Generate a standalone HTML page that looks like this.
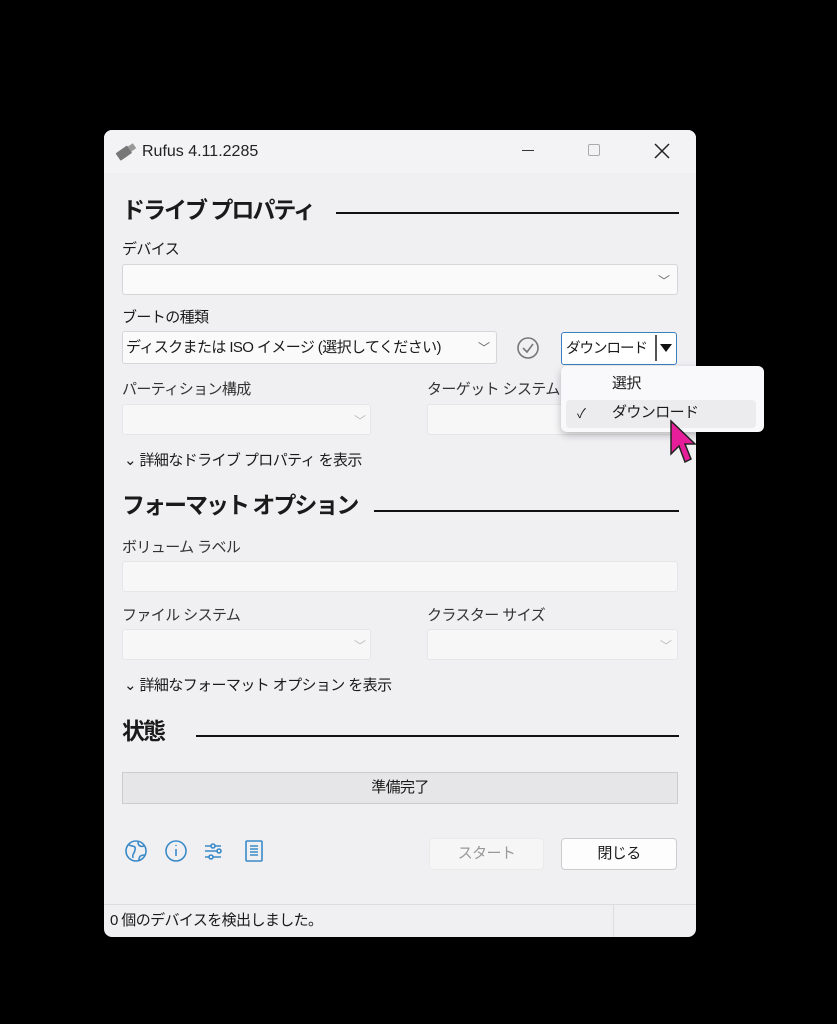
<!DOCTYPE html><html><head><meta charset="utf-8"><style>
*{margin:0;padding:0;box-sizing:border-box}
body{width:837px;height:1024px;background:#000;position:relative;overflow:hidden;font-family:"Liberation Sans","Noto Sans CJK JP",sans-serif;color:#1a1a1a}
.a{position:absolute}
#w{left:104px;top:130px;width:592px;height:807px;background:#f0f0f3;border-radius:8px;overflow:hidden}
.t{font-size:15px;white-space:nowrap;letter-spacing:-0.6px;line-height:20px}
.h{font-size:23px;font-weight:bold;letter-spacing:-2px;white-space:nowrap;line-height:30px}
.ln{height:2px;background:#111}
.box{border:1px solid #d6d6d8;background:#fafafa;border-radius:3px}
.dis{border:1px solid #e6e6e8;background:#f7f7f8}
.chev{font-size:12px;color:#666;line-height:14px}
</style></head><body>
<div id="w" class="a">
<div class="a" style="left:0;top:0;width:592px;height:43px;background:#f3f3f5"></div>
<svg class="a" style="left:10px;top:10px" width="24" height="22"><g transform="rotate(-35 12 11)"><rect x="2" y="7" width="14" height="9" rx="1" fill="#777"/><rect x="16" y="8.5" width="6" height="6" fill="#999"/></g></svg>
<div class="a t" style="left:38px;top:12px;font-size:16px;letter-spacing:0;color:#222">Rufus 4.11.2285</div>
<div class="a" style="left:418px;top:20px;width:12px;height:1px;background:#333"></div>
<div class="a" style="left:484px;top:14px;width:12px;height:12px;border:1px solid #aaa;border-radius:2px"></div>
<svg class="a" style="left:550px;top:13px" width="16" height="16"><path d="M1 1L15 15M15 1L1 15" stroke="#222" stroke-width="1.5"/></svg>

<div class="a h" style="left:18px;top:65px">ドライブ プロパティ</div>
<div class="a ln" style="left:232px;top:82px;width:343px"></div>
<div class="a t" style="left:18px;top:110px">デバイス</div>
<div class="a box" style="left:18px;top:134px;width:556px;height:31px"></div>
<div class="a chev" style="left:554px;top:144px">﹀</div>
<div class="a t" style="left:18px;top:178px">ブートの種類</div>
<div class="a box" style="left:18px;top:201px;width:375px;height:33px"></div>
<div class="a t" style="left:22px;top:208px">ディスクまたは ISO イメージ (選択してください)</div>
<div class="a chev" style="left:374px;top:211px">﹀</div>
<svg class="a" style="left:412px;top:206px" width="24" height="24"><circle cx="12" cy="12" r="10" fill="none" stroke="#777" stroke-width="1.6"/><path d="M7 12l4 4 6-8" fill="none" stroke="#777" stroke-width="1.6"/></svg>
<div class="a" style="left:457px;top:202px;width:116px;height:33px;border:1.5px solid #3c7fc0;background:#fff;border-radius:3px"></div>
<div class="a t" style="left:462px;top:209px;font-size:14.5px;letter-spacing:-1px">ダウンロード</div>
<div class="a" style="left:551px;top:205px;width:2px;height:26px;background:#555"></div>
<div class="a" style="left:556px;top:214px;width:0;height:0;border-left:6px solid transparent;border-right:6px solid transparent;border-top:8px solid #111"></div>

<div class="a t" style="left:18px;top:250px;color:#333">パーティション構成</div>
<div class="a box dis" style="left:18px;top:274px;width:249px;height:31px"></div>
<div class="a chev" style="left:250px;top:284px;color:#bbb">﹀</div>
<div class="a t" style="left:323px;top:250px;color:#333">ターゲット システム</div>
<div class="a box dis" style="left:323px;top:274px;width:251px;height:31px"></div>
<div class="a t" style="left:20px;top:321px;font-size:15px">⌄ 詳細なドライブ プロパティ を表示</div>

<div class="a h" style="left:18px;top:360px">フォーマット オプション</div>
<div class="a ln" style="left:270px;top:380px;width:305px"></div>
<div class="a t" style="left:18px;top:408px;color:#333">ボリューム ラベル</div>
<div class="a box dis" style="left:18px;top:431px;width:556px;height:31px"></div>
<div class="a t" style="left:18px;top:476px;color:#333">ファイル システム</div>
<div class="a box dis" style="left:18px;top:499px;width:249px;height:31px"></div>
<div class="a chev" style="left:250px;top:509px;color:#bbb">﹀</div>
<div class="a t" style="left:323px;top:476px;color:#333">クラスター サイズ</div>
<div class="a box dis" style="left:323px;top:499px;width:251px;height:31px"></div>
<div class="a chev" style="left:556px;top:509px;color:#bbb">﹀</div>
<div class="a t" style="left:20px;top:546px;font-size:15px">⌄ 詳細なフォーマット オプション を表示</div>

<div class="a h" style="left:18px;top:586px">状態</div>
<div class="a ln" style="left:92px;top:605px;width:483px"></div>
<div class="a" style="left:18px;top:642px;width:556px;height:32px;background:#e6e6e8;border:1px solid #ccc"></div>
<div class="a t" style="left:0;top:648px;width:592px;text-align:center">準備完了</div>

<svg class="a" style="left:20px;top:708px" width="160" height="26" fill="none" stroke="#3a8ac8" stroke-width="1.6"><circle cx="12" cy="13" r="10"/><path d="M5 7c4 2 7 0 6 5s-3 3-2 8M14 4c0 4 3 5 6 4M15 22c0-4 2-5 6-5"/><circle cx="52" cy="13" r="10"/><path d="M52 11v7M52 7v1"/><path d="M81 8h6M91 8h6M81 13h12M81 19h4M89 19h8"/><circle cx="89" cy="8" r="2"/><circle cx="95" cy="13" r="2"/><circle cx="87" cy="19" r="2"/><rect x="122" y="3" width="16" height="20" rx="1"/><path d="M126 8h8M126 11h8M126 14h8M126 17h8"/></svg>
<div class="a" style="left:325px;top:708px;width:115px;height:32px;background:#f6f6f7;border:1px solid #eaeaea;border-radius:4px"></div>
<div class="a t" style="left:325px;top:714px;width:115px;text-align:center;color:#999">スタート</div>
<div class="a" style="left:457px;top:708px;width:116px;height:32px;background:#fdfdfd;border:1px solid #ccc;border-radius:4px"></div>
<div class="a t" style="left:457px;top:714px;width:116px;text-align:center">閉じる</div>

<div class="a" style="left:0;top:774px;width:592px;height:1px;background:#ddd"></div>
<div class="a" style="left:509px;top:775px;width:1px;height:32px;background:#ddd"></div>
<div class="a t" style="left:6px;top:781px">0 個のデバイスを検出しました。</div>
</div>

<div class="a" style="left:561px;top:366px;width:203px;height:66px;background:#f9f9fb;border-radius:6px;box-shadow:0 3px 8px rgba(0,0,0,.25)"></div>
<div class="a t" style="left:612px;top:374px">選択</div>
<div class="a" style="left:566px;top:400px;width:190px;height:28px;background:#ececef;border-radius:4px"></div>
<div class="a t" style="left:577px;top:404px;font-size:13px">✓</div>
<div class="a t" style="left:612px;top:403px">ダウンロード</div>
<svg class="a" style="left:668px;top:418px" width="28" height="48"><path d="M3 3L3 36L11 28L17 44L23 41L17 26L27 26Z" fill="#e61e9a" stroke="#222" stroke-width="1.5"/></svg>
</body></html>
